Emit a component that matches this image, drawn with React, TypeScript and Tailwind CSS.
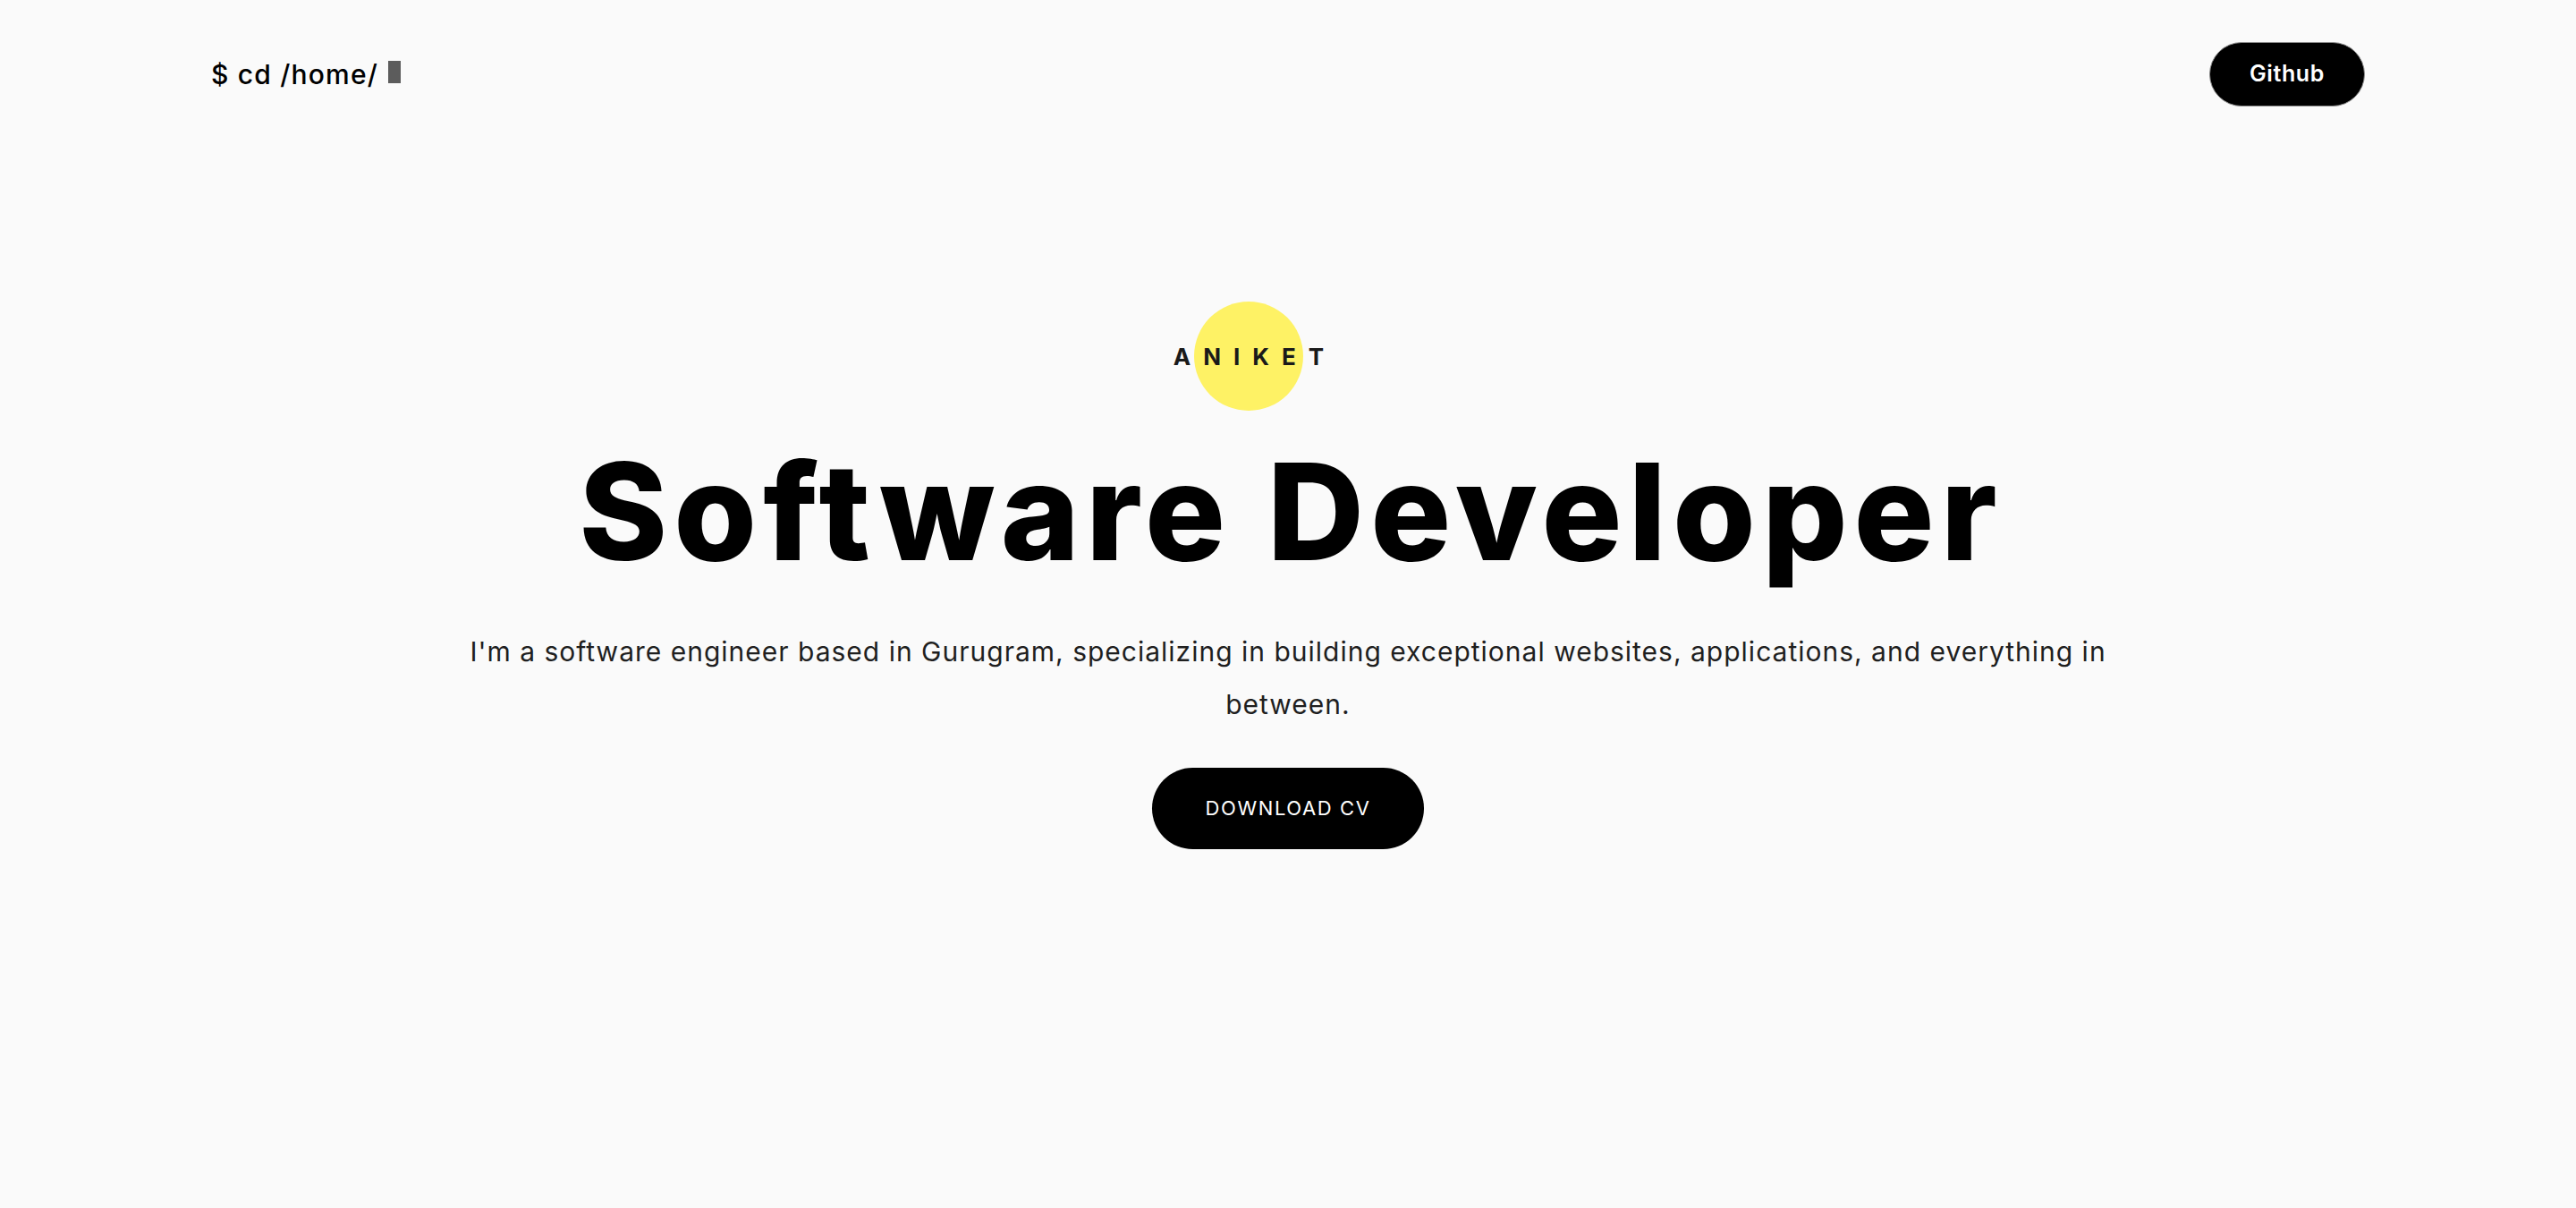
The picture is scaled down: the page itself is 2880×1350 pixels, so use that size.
import React from "react";

const font = { fontFamily: "Inter, 'Noto Sans', sans-serif" };

const Header = () => {
  return (
    <header className="flex items-center justify-between px-[236px] pt-[47px]">
      <div className="flex items-center text-[30px] font-medium tracking-[1.2px] text-black">
        <span>$ cd /home/</span>
        <span className="ml-[11px] -mt-[5px] inline-block h-[25px] w-[14px] bg-[#5c5c5c]" />
      </div>
      <a
        href="#"
        className="flex h-[72px] w-[174px] items-center justify-center rounded-full border border-[#8a8a8a] bg-black text-[25px] font-semibold tracking-[0.6px] text-white"
      >
        Github
      </a>
    </header>
  );
};

const Hero = () => {
  return (
    <section className="flex flex-col items-center pt-[218px]">
      <div className="relative mr-[88px] flex h-[122px] items-center justify-center">
        <span className="absolute left-1/2 top-0 h-[122px] w-[122px] -translate-x-1/2 rounded-full bg-[#fef265]" />
        <span className="relative mr-[-14px] text-[26px] font-bold tracking-[14px] text-[#1a1a1a]">
          ANIKET
        </span>
      </div>
      <h1 className="mt-[38px] mr-[-7px] text-[150px] font-extrabold leading-none tracking-[7px] text-black">
        Software Developer
      </h1>
      <p className="mt-[52px] text-center text-[30px] leading-[59px] tracking-[1px] text-[#1f1f1f]">
        I'm a software engineer based in Gurugram, specializing in building
        exceptional websites, applications, and everything in
        <br />
        between.
      </p>
      <a
        href="#"
        className="mt-[41px] flex h-[91px] w-[304px] items-center justify-center rounded-full bg-black text-[22px] uppercase tracking-[1.6px] text-white"
      >
        Download CV
      </a>
    </section>
  );
};

export default function App() {
  return (
    <div className="min-h-[1350px] w-full bg-[#fafafa]" style={font}>
      <Header />
      <Hero />
    </div>
  );
}
